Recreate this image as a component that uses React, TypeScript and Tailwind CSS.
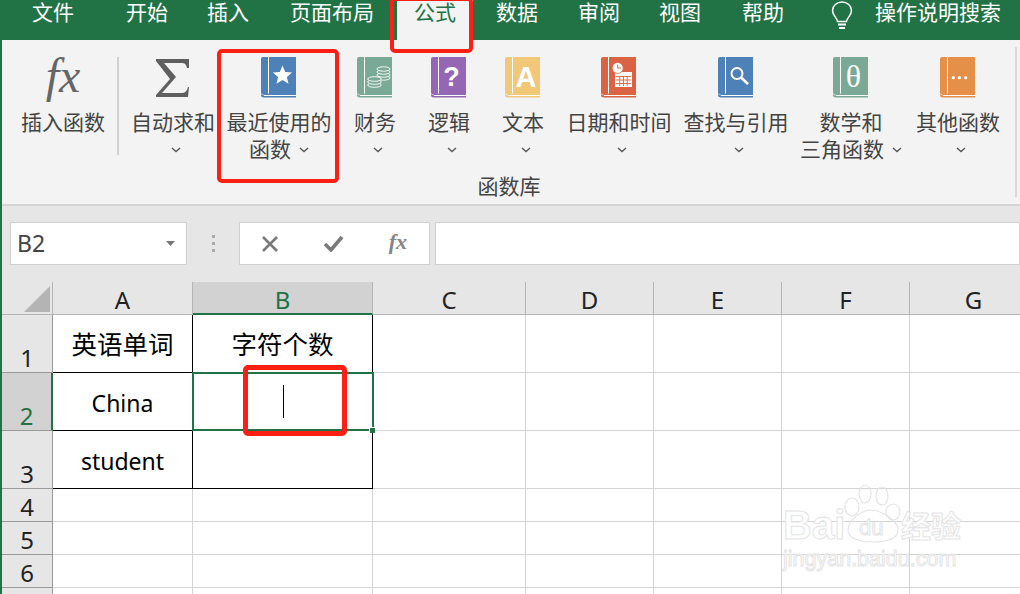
import React from "react";

const tabs = [
  ["文件", "w-[96px]"],
  ["开始", "w-[92px]"],
  ["插入", "w-[70px]"],
  ["页面布局", "w-[134px] pl-[4px]"],
  ["公式", "w-[76px]"],
  ["数据", "w-[88px]"],
  ["审阅", "w-[76px]"],
  ["视图", "w-[86px]"],
  ["帮助", "w-[80px]"],
];

function Chevron() {
  return (
    <svg width="10" height="6" viewBox="0 0 10 6" className="shrink-0">
      <path d="M1 1l4 3.6L9 1" fill="none" stroke="#555" strokeWidth="1.3" />
    </svg>
  );
}

function Book({ color, children }: { color: string; children?: React.ReactNode }) {
  return (
    <svg width="35" height="41" viewBox="0 0 35 41" className="block">
      <path d="M2 0H35V40.5H3Q0 40.5 0 38V2Q0 0 2 0Z" fill={color} />
      <path d="M7.5 0V36.5M3 38.5H35" stroke="#fff" strokeWidth="1" fill="none" />
      <path d="M0 36Q0 38 3 38" stroke="#fff" strokeWidth="0.8" fill="none" opacity="0.6" />
      {children}
    </svg>
  );
}

function Star() {
  return <path d="M21.5 8.5l2.7 6.4 6.9.6-5.2 4.5 1.6 6.7-6-3.6-6 3.6 1.6-6.7-5.2-4.5 6.9-.6z" fill="#fff" />;
}
function Coins() {
  return (
    <g fill="#7aa995" stroke="#fff" strokeWidth="0.9">
      {[21, 18, 15, 12].map((y) => <ellipse key={y} cx="26.5" cy={y} rx="6.5" ry="2.2" />)}
      {[28, 25, 22].map((y) => <ellipse key={y} cx="17.5" cy={y} rx="6.8" ry="2.3" />)}
    </g>
  );
}
function Calendar() {
  return (
    <g>
      <rect x="14" y="15" width="17" height="15" fill="#fff" />
      <g stroke="#d96342" strokeWidth="0.9">
        <path d="M15 19.5H30M15 23H30M15 26.5H30M18.8 19V29M22.5 19V29M26.2 19V29" />
      </g>
      <circle cx="16.7" cy="11" r="5.5" fill="#fff" stroke="#d96342" strokeWidth="0.8" />
      <path d="M16.7 7.5V11H20" stroke="#d96342" strokeWidth="1" fill="none" />
    </g>
  );
}
function Lens() {
  return (
    <g fill="none" stroke="#fff">
      <circle cx="19" cy="16.5" r="5.5" strokeWidth="2" />
      <path d="M23 20.5L30 27" strokeWidth="2.6" />
    </g>
  );
}
function Dots() {
  return (
    <g fill="#fff">
      <circle cx="13.3" cy="20.7" r="1.6" />
      <circle cx="19.4" cy="20.7" r="1.6" />
      <circle cx="25.7" cy="20.7" r="1.6" />
    </g>
  );
}

function Item({ w, l1, l2, icon, single }: { w: string; l1: string; l2?: string; icon: React.ReactNode; single?: boolean }) {
  return (
    <div className={`${w} flex flex-col items-center shrink-0 text-[21px] leading-[27px] text-[#444]`}>
      <div className={`h-[41px] mt-[17px] flex items-start justify-center ${single ? "" : "mr-[2px]"}`}>{icon}</div>
      <div className="mt-[11px] whitespace-nowrap h-[27px]">{l1}</div>
      {l2 ? (
        <div className="flex items-center gap-[8px] whitespace-nowrap h-[27px]">
          <span>{l2}</span>
          <Chevron />
        </div>
      ) : (
        !single && (
          <div className="flex items-center h-[27px] ml-[6px]">
            <Chevron />
          </div>
        )
      )}
    </div>
  );
}

const glyph = "font-['Liberation_Sans',sans-serif] font-bold";

const cols = ["A", "B", "C", "D", "E", "F", "G"];
const rows = [
  { n: "1", h: "h-[58px]", a: "英语单词", b: "字符个数" },
  { n: "2", h: "h-[58px]", a: "China", b: "" },
  { n: "3", h: "h-[58px]", a: "student", b: "" },
  { n: "4", h: "h-[33px]", a: "", b: "" },
  { n: "5", h: "h-[33px]", a: "", b: "" },
  { n: "6", h: "h-[33px]", a: "", b: "" },
  { n: "", h: "h-[33px]", a: "", b: "" },
];
const widths = ["w-[140px]", "w-[180px]", "w-[153px]", "w-[128px]", "w-[128px]", "w-[128px]", "w-[128px]"];

export default function App() {
  return (
    <div className="relative w-[1020px] h-[594px] overflow-hidden bg-white font-['Noto_Sans','Noto_Sans_CJK_SC',sans-serif]">
      <div className="h-[40px] bg-[#217346] flex pl-[5px] text-white text-[21px] leading-[25px]">
        {tabs.map(([t, w]) => (
          <div
            key={t}
            className={`${w} text-center shrink-0 ${t === "公式" ? "bg-[#f3f3f3] text-[#217346]" : ""}`}
          >
            {t}
          </div>
        ))}
        <div className="ml-[28px] flex items-start gap-[22px]">
          <svg width="22" height="30" viewBox="0 0 22 30" className="mt-[1px]">
            <path
              d="M6.5 20.5C6 16.5 1.5 14.5 1.5 9.5A9.5 8.5 0 0 1 20.5 9.5C20.5 14.5 16 16.5 15.5 20.5Z"
              fill="none"
              stroke="#fff"
              strokeWidth="1.5"
            />
            <path d="M7 23.5H15M8 27H14" stroke="#fff" strokeWidth="2" />
          </svg>
          <span className="whitespace-nowrap">操作说明搜索</span>
        </div>
      </div>

      <div className="relative h-[166px] border-l-2 border-[#217346] bg-[#f3f3f3]">
        <div className="h-[164px] border-b-2 border-[#d4d4d4] box-content pl-2 flex">
          <Item
            w="w-[106px]"
            l1="插入函数"
            single
            icon={
              <span className="font-['Liberation_Serif',serif] italic text-[48px] leading-[37px] text-[#666]">fx</span>
            }
          />
          <div className="w-[2px] h-[98px] mt-[17px] ml-[1px] mr-[1px] bg-[#d0d0d0] shrink-0" />
          <Item
            w="w-[106px]"
            l1="自动求和"
            icon={
              <svg width="35" height="41" viewBox="0 0 35 41">
                <path d="M1 2H34V11H32C31 7 30 6 26 6H9L21 20L7 36H27C30 36 32 34 33 30H34L33 40H1V38L15 22L1 4Z" fill="#5f5f5f" />
              </svg>
            }
          />
          <Item w="w-[106px]" l1="最近使用的" l2="函数" icon={<Book color="#4e81b8"><Star /></Book>} />
          <Item w="w-[86px]" l1="财务" icon={<Book color="#7aa995"><Coins /></Book>} />
          <Item
            w="w-[62px]"
            l1="逻辑"
            icon={
              <Book color="#9566b3">
                <text x="20.5" y="29" textAnchor="middle" fill="#fff" fontSize="27" className={glyph}>?</text>
              </Book>
            }
          />
          <Item
            w="w-[86px]"
            l1="文本"
            icon={
              <Book color="#f0c878">
                <text x="21" y="29.5" textAnchor="middle" fill="#fff" fontSize="29" className={glyph}>A</text>
              </Book>
            }
          />
          <Item w="w-[106px]" l1="日期和时间" icon={<Book color="#d96342"><Calendar /></Book>} />
          <Item w="w-[128px]" l1="查找与引用" icon={<Book color="#4e81b8"><Lens /></Book>} />
          <Item
            w="w-[102px]"
            l1="数学和"
            l2="三角函数"
            icon={
              <Book color="#7aa995">
                <text x="20.5" y="30" textAnchor="middle" fill="#fff" fontSize="32" className="font-['Liberation_Serif',serif]">θ</text>
              </Book>
            }
          />
          <Item w="w-[112px]" l1="其他函数" icon={<Book color="#e68f49"><Dots /></Book>} />
          <div className="w-[2px] h-[150px] mt-[7px] ml-[1px] bg-[#d8d8d8] shrink-0" />
        </div>
        <div className="absolute left-0 right-0 top-[133px] text-center pr-[4px] text-[21px] leading-[27px] text-[#444]">
          函数库
        </div>
      </div>

      <div className="h-[76px] border-l-2 border-[#217346] bg-[#e6e6e6] flex items-start pt-[16px] pl-[8px]">
        <div className="w-[177px] h-[43px] bg-white border border-[#d0d0d0] flex items-center justify-between pl-[6px] pr-[11px] text-[23px] text-[#444]">
          <span>B2</span>
          <svg width="9" height="5" viewBox="0 0 9 5"><path d="M0 0H9L4.5 5Z" fill="#777" /></svg>
        </div>
        <div className="w-[52px] h-[43px] flex flex-col items-center justify-center gap-[4px]">
          <i className="block w-[3px] h-[3px] bg-[#aaa]" />
          <i className="block w-[3px] h-[3px] bg-[#aaa]" />
          <i className="block w-[3px] h-[3px] bg-[#aaa]" />
        </div>
        <div className="w-[191px] h-[43px] bg-white border border-[#d0d0d0] flex items-center justify-between pl-[21px] pr-[22px]">
          <svg width="18" height="18" viewBox="0 0 18 18"><path d="M2 2L16 16M16 2L2 16" stroke="#7a7a7a" strokeWidth="2.6" /></svg>
          <svg width="21" height="17" viewBox="0 0 21 17"><path d="M2 9L8 15L19 2" fill="none" stroke="#7a7a7a" strokeWidth="3.6" /></svg>
          <span className="font-['Liberation_Serif',serif] italic font-bold text-[22px] leading-none text-[#858585] mb-[3px]">fx</span>
        </div>
        <div className="ml-[5px] flex-1 h-[43px] bg-white border border-[#d0d0d0]" />
      </div>

      <div className="h-[312px] border-l-2 border-[#217346] flex flex-col text-black">
        <div className="flex h-[33px] bg-[#e6e6e6] text-[24px] leading-[36px] text-[#222]">
          <div className="relative w-[51px] shrink-0 border-r border-b border-[#b5b5b5]">
            <svg width="26" height="26" viewBox="0 0 26 26" className="absolute right-[2px] bottom-[2px]">
              <path d="M26 0V26H0Z" fill="#b4b4b4" />
            </svg>
          </div>
          {cols.map((c, i) => (
            <div
              key={c}
              className={`${widths[i]} shrink-0 text-center border-r ${
                c === "B"
                  ? "bg-[#d2d2d2] text-[#217346] border-b-2 border-b-[#217346] border-r-[#b5b5b5]"
                  : "border-b border-[#b5b5b5]"
              }`}
            >
              {c}
            </div>
          ))}
        </div>
        {rows.map((r) => {
          const inTable = r.n === "1" || r.n === "2" || r.n === "3";
          return (
            <div key={r.h + r.n} className={`flex ${r.h} shrink-0`}>
              <div
                className={`w-[51px] shrink-0 flex items-end justify-center text-[24px] leading-[28px] border-b border-r border-[#9a9a9a] ${
                  r.n === "2" ? "bg-[#d2d2d2] text-[#217346] border-r-2 border-r-[#217346]" : "bg-[#e6e6e6] text-[#222]"
                }`}
              >
                {r.n}
              </div>
              {cols.map((c, i) => {
                const value = i === 0 ? r.a : i === 1 ? r.b : "";
                const cjk = r.n === "1";
                return (
                  <div
                    key={c}
                    className={`${widths[i]} shrink-0 flex items-center justify-center border-r border-b ${
                      cjk ? "text-[25.5px] pt-[2px]" : "text-[23px] pt-[4px]"
                    } ${inTable && i < 2 ? "border-black" : "border-[#d4d4d4]"}`}
                  >
                    {value}
                  </div>
                );
              })}
            </div>
          );
        })}
      </div>

      {/* selection */}
      <div className="absolute left-[192px] top-[372px] w-[182px] h-[59px] border-2 border-[#217346]" />
      <div className="absolute left-[369px] top-[427px] w-[6px] h-[6px] bg-[#217346] border-l border-t border-white" />
      <div className="absolute left-[283px] top-[385px] w-[1px] h-[33px] bg-black" />

      {/* annotations */}
      <div className="absolute left-[390px] top-[-3px] w-[83px] h-[56px] border-[4px] border-[#fb1f14] rounded-[5px]" />
      <div className="absolute left-[217px] top-[49px] w-[122px] h-[134px] border-[4px] border-[#fb1f14] rounded-[5px]" />
      <div className="absolute left-[243px] top-[365px] w-[104px] h-[71px] border-[5px] border-[#fb1f14] rounded-[5px]" />

      {/* watermark */}
      <div className="absolute left-[783px] top-[484px] w-[190px] h-[92px] text-white">
        <svg width="80" height="62" viewBox="0 0 80 62" className="absolute left-[55px] top-0" fill="none" stroke="#e4e4e4" strokeWidth="1.2">
          <ellipse cx="14" cy="23" rx="7" ry="9" />
          <ellipse cx="27" cy="10" rx="6" ry="9" />
          <ellipse cx="44" cy="12" rx="6" ry="9" />
          <ellipse cx="55" cy="28" rx="7" ry="8" />
          <path d="M10 46C10 35 25 26 33 26C42 26 60 36 60 46C60 54 50 58 34 58C20 58 10 54 10 46Z" />
        </svg>
        <div className="absolute left-0 top-[21px] text-[40px] leading-[40px] font-['Liberation_Sans',sans-serif] font-bold text-white [-webkit-text-stroke:1px_#e4e4e4] whitespace-nowrap">Bai</div>
        <div className="absolute left-[76px] top-[32px] text-[22px] leading-[24px] font-['Liberation_Sans',sans-serif] text-white [-webkit-text-stroke:1px_#e4e4e4]">du</div>
        <div className="absolute left-[118px] top-[24px] text-[30px] leading-[36px] font-bold text-white [-webkit-text-stroke:1px_#e4e4e4] whitespace-nowrap">经验</div>
        <div className="absolute left-0 top-[62px] text-[21.5px] leading-[26px] font-['Liberation_Sans',sans-serif] text-white [-webkit-text-stroke:1px_#e4e4e4] whitespace-nowrap">jingyan.baidu.com</div>
      </div>
    </div>
  );
}
